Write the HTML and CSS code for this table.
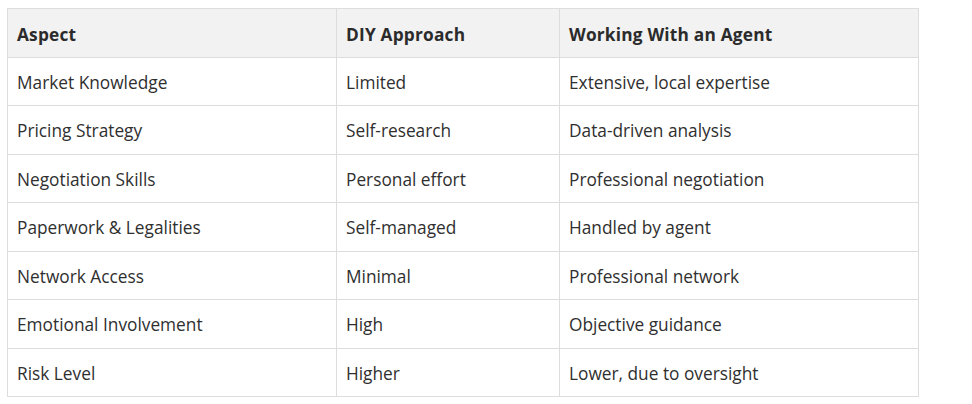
FILE: index.html
```html
<!DOCTYPE html>
<html>
<head>
<meta charset="utf-8">
<link rel="stylesheet" href="styles.css">
</head>
<body>
<table class="cmp">
  <colgroup><col class="c1"><col class="c2"><col class="c3"></colgroup>
  <thead>
    <tr><th>Aspect</th><th>DIY Approach</th><th>Working With an Agent</th></tr>
  </thead>
  <tbody>
    <tr><td>Market Knowledge</td><td>Limited</td><td>Extensive, local expertise</td></tr>
    <tr><td>Pricing Strategy</td><td>Self-research</td><td>Data-driven analysis</td></tr>
    <tr><td>Negotiation Skills</td><td>Personal effort</td><td>Professional negotiation</td></tr>
    <tr><td>Paperwork &amp; Legalities</td><td>Self-managed</td><td>Handled by agent</td></tr>
    <tr><td>Network Access</td><td>Minimal</td><td>Professional network</td></tr>
    <tr><td>Emotional Involvement</td><td>High</td><td>Objective guidance</td></tr>
    <tr><td>Risk Level</td><td>Higher</td><td>Lower, due to oversight</td></tr>
  </tbody>
</table>
</body>
</html>
```

FILE: styles.css
```css
html, body {
  background: #ffffff;
}
body {
  margin: 8px 7px;
  font-family: "Segoe UI", "Open Sans", "Noto Sans", sans-serif;
  font-size: 17.3px;
  color: #2f2f2f;
}
.cmp {
  border-collapse: collapse;
  width: 911px;
  table-layout: fixed;
}
.c1 { width: 329px; }
.c2 { width: 223px; }
.c3 { width: 359px; }
.cmp th, .cmp td {
  border: 1px solid #dddddd;
  padding: 13px 10px 11px 9px;
  line-height: 23.5px;
  text-align: left;
  vertical-align: middle;
}
.cmp th {
  background: #f2f2f2;
  font-weight: 700;
  color: #2b2b2b;
  padding-top: 14px;
  padding-bottom: 10px;
  letter-spacing: 0.2px;
}
```
